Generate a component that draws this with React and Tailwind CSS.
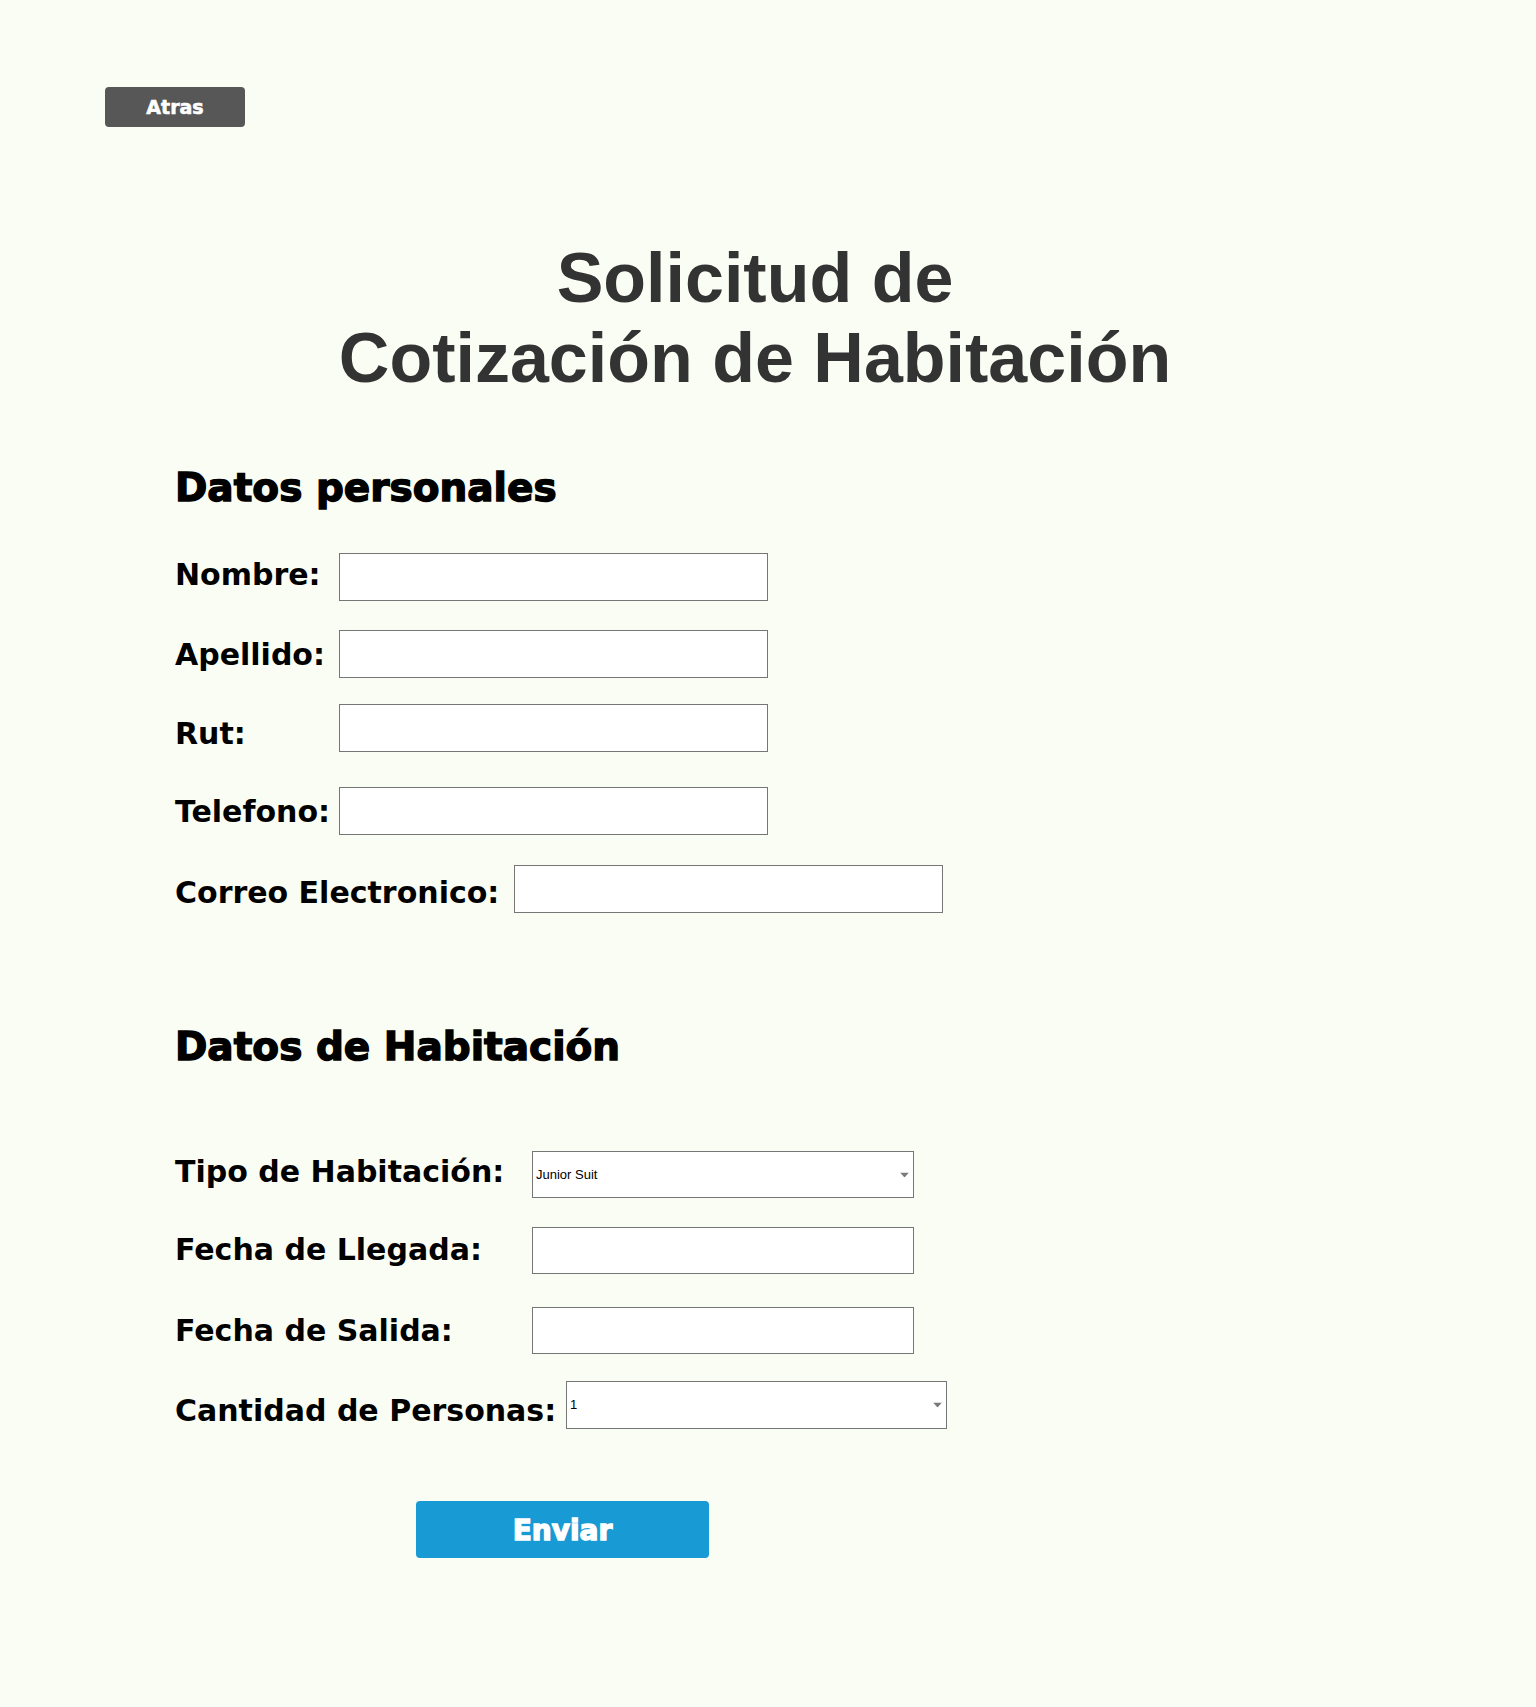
import { useState } from 'react'

const heavy = "font-['DejaVu_Sans',Verdana,sans-serif] font-bold"

// row spacing is uneven in the original, so each row carries its own offsets
const PERSONAL = [
  { id: 'nombre', label: 'Nombre:', row: 'mt-[43px]', lab: 'w-[164px] mt-[4px]' },
  { id: 'apellido', label: 'Apellido:', row: 'mt-[29px]', lab: 'w-[164px] mt-[7px]' },
  { id: 'rut', label: 'Rut:', row: 'mt-[26px]', lab: 'w-[164px] mt-[12px]' },
  { id: 'telefono', label: 'Telefono:', row: 'mt-[35px]', lab: 'w-[164px] mt-[7px]' },
  { id: 'correo', label: 'Correo Electronico:', row: 'mt-[30px]', lab: 'w-[339px] mt-[10px]' },
]

function Label({ children, className }) {
  return (
    <label className={`${heavy} shrink-0 text-[30px] leading-[36px] text-black ${className}`}>
      {children}
    </label>
  )
}

function TextInput({ className = 'w-[429px] h-[48px]' }) {
  return <input type="text" className={`${className} bg-white border border-[#767676] outline-none px-1`} />
}

function Select({ options, value, onChange, className }) {
  return (
    <div className={`relative ${className}`}>
      <select
        value={value}
        onChange={(e) => onChange(e.target.value)}
        className="appearance-none w-full h-full bg-white border border-[#767676] pl-[3px] text-[13px] text-black font-['Liberation_Sans',Arial,sans-serif] outline-none"
      >
        {options.map((o) => (
          <option key={o}>{o}</option>
        ))}
      </select>
      <svg className="absolute right-[5px] top-1/2 -translate-y-1/2 pointer-events-none" width="9" height="5" viewBox="0 0 9 5">
        <path d="M0 0h9L4.5 5z" fill="#7a7a7a" />
      </svg>
    </div>
  )
}

export default function App() {
  const [tipo, setTipo] = useState('Junior Suit')
  const [personas, setPersonas] = useState('1')

  return (
    <div className="min-h-[1707px] bg-[#fafdf4] pt-[87px]">
      <button className={`${heavy} ml-[105px] w-[140px] h-[40px] rounded-[4px] bg-[#575757] text-white text-[19px] [-webkit-text-stroke:0.6px_#fff]`}>
        Atras
      </button>

      <h1 className="w-[1510px] mt-[111px] text-center font-['Liberation_Sans',Arial,sans-serif] font-bold text-[70px] leading-[80px] text-[#333333]">
        Solicitud de
        <br />
        Cotización de Habitación
      </h1>

      <form className="pl-[175px]" onSubmit={(e) => e.preventDefault()}>
        <h2 className={`${heavy} mt-[68px] text-[39px] leading-[44px] text-black [-webkit-text-stroke:1.4px_#000]`}>
          Datos personales
        </h2>

        {PERSONAL.map((f) => (
          <div key={f.id} className={`flex items-start ${f.row}`}>
            <Label className={f.lab}>{f.label}</Label>
            <TextInput />
          </div>
        ))}

        <h2 className={`${heavy} mt-[112px] text-[39px] leading-[44px] text-black [-webkit-text-stroke:1.4px_#000]`}>
          Datos de Habitación
        </h2>

        <div className="flex items-start mt-[82px]">
          <Label className="w-[357px] mt-[3px]">Tipo de Habitación:</Label>
          <Select
            className="w-[382px] h-[47px]"
            value={tipo}
            onChange={setTipo}
            options={['Junior Suit', 'Suite', 'Doble', 'Simple']}
          />
        </div>

        <div className="flex items-start mt-[29px]">
          <Label className="w-[357px] mt-[5px]">Fecha de Llegada:</Label>
          <TextInput className="w-[382px] h-[47px]" />
        </div>

        <div className="flex items-start mt-[33px]">
          <Label className="w-[357px] mt-[6px]">Fecha de Salida:</Label>
          <TextInput className="w-[382px] h-[47px]" />
        </div>

        <div className="flex items-start mt-[27px]">
          <Label className="w-[391px] mt-[12px]">Cantidad de Personas:</Label>
          <Select
            className="w-[381px] h-[48px]"
            value={personas}
            onChange={setPersonas}
            options={['1', '2', '3', '4', '5']}
          />
        </div>

        <button
          type="submit"
          className={`${heavy} block mt-[72px] ml-[241px] w-[293px] h-[57px] pt-[3px] rounded-[4px] bg-[#189bd4] text-white text-[28px] [-webkit-text-stroke:1.4px_#fff]`}
        >
          Enviar
        </button>
      </form>
    </div>
  )
}
